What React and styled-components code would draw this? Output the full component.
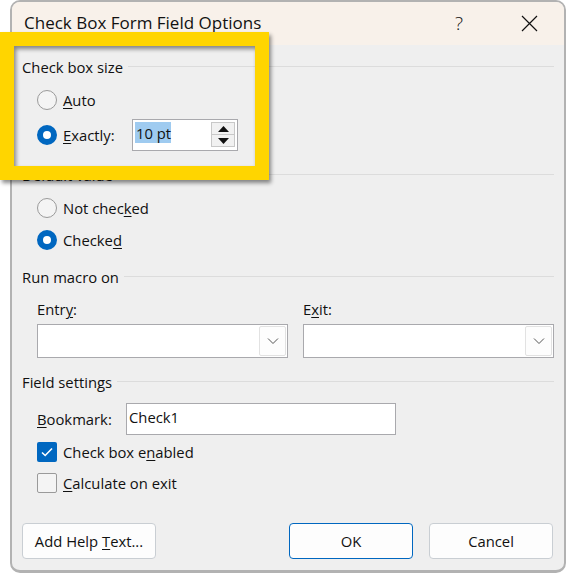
import React from "react";
import styled, { createGlobalStyle } from "styled-components";

const Global = createGlobalStyle`
  html, body {
    margin: 0;
    background: #fff;
  }
  body {
    font-family: "Open Sans", "Noto Sans", sans-serif;
    color: #111;
    font-size: 14.8px;
  }
`;

const Page = styled("div")`
  position: relative;
  width: 566px;
  height: 573px;
  overflow: hidden;
  padding-left: 10px;
  box-sizing: border-box;
`;

const Dialog = styled("div")`
  display: flex;
  flex-direction: column;
  box-sizing: border-box;
  width: 556px;
  height: 573px;
  background: #efefef;
  border: 2px solid #b2b2b2;
  border-bottom-width: 3px;
  border-radius: 10px;
  overflow: hidden;
`;

const TitleBar = styled("div")`
  display: flex;
  align-items: center;
  flex: none;
  height: 43px;
  padding-left: 12px;
  background: #f8f1ea;
`;

const Title = styled("div")`
  flex: 1;
  font-size: 17px;
  margin-top: -2px;
`;

const HelpGlyph = styled("div")`
  width: 24px;
  margin-right: 50px;
  margin-top: -2px;
  text-align: center;
  font-size: 19px;
  font-weight: 300;
`;

const CloseButton = styled("svg")`
  width: 17px;
  height: 17px;
  margin-right: 26px;
  margin-top: -1px;
`;

const Body = styled("div")`
  display: flex;
  flex-direction: column;
  flex: 1;
  padding: 11px 10px 11px;
`;

const Section = styled("div")`
  display: flex;
  flex-direction: column;
  margin-top: ${(p) => p.$before || 0}px;
`;

const SectionHeader = styled("div")`
  display: flex;
  align-items: center;
  height: 22px;
  gap: 5px;
  white-space: nowrap;

  &::after {
    content: "";
    flex: 1;
    height: 1px;
    margin-top: -1px;
    background: #dcdcdc;
  }
`;

const Stack = styled("div")`
  display: flex;
  flex-direction: column;
  padding-top: ${(p) => p.$top}px;
  gap: ${(p) => p.$gap}px;
`;

const OptionRow = styled("div")`
  display: flex;
  align-items: center;
  height: ${(p) => p.$h || 30}px;
  padding-left: 15px;
`;

const Radio = styled("span")`
  flex: none;
  box-sizing: border-box;
  width: 20px;
  height: 20px;
  border-radius: 50%;
  margin-right: 6px;
  background: ${(p) => (p.$on ? "#fff" : "#f4f4f4")};
  border: ${(p) => (p.$on ? "6px solid #0067c0" : "1.5px solid #9a9a9a")};
`;

const CheckBox = styled("span")`
  display: flex;
  align-items: center;
  justify-content: center;
  flex: none;
  box-sizing: border-box;
  width: 20px;
  height: 20px;
  border-radius: 2px;
  margin-right: 6px;
  background: ${(p) => (p.$on ? "#0067c0" : "#f4f4f4")};
  border: ${(p) => (p.$on ? "none" : "1.5px solid #9a9a9a")};
`;

const Label = styled("span")`
  flex: none;
  width: ${(p) => (p.$w ? `${p.$w}px` : "auto")};
  white-space: nowrap;

  u {
    text-underline-offset: 2px;
    text-decoration-thickness: 1px;
  }
`;

const Spinner = styled("div")`
  display: flex;
  align-items: flex-start;
  box-sizing: border-box;
  width: 106px;
  height: 32px;
  margin-left: 18px;
  padding: 2px;
  background: #fff;
  border: 1px solid #a9a9ad;
`;

const SpinnerValue = styled("div")`
  display: flex;
  flex: 1;
`;

const Selected = styled("span")`
  width: 36px;
  height: 21px;
  padding-left: 1px;
  box-sizing: border-box;
  line-height: 22px;
  background: #9fcbf0;
  white-space: nowrap;
`;

const SpinnerButtons = styled("div")`
  display: flex;
  flex-direction: column;
  flex: none;
  width: 24px;
  height: 25px;
`;

const SpinnerButton = styled("div")`
  display: flex;
  align-items: center;
  justify-content: center;
  flex: 1;
  background: #f1f1f1;
  border: 1px solid #c8c8c8;
  box-sizing: border-box;

  & + & {
    border-top: none;
  }
`;

const Combos = styled("div")`
  display: grid;
  grid-template-columns: 251px 251px;
  column-gap: 15px;
  padding: 11px 0 0 15px;
`;

const FieldLabel = styled("div")`
  height: 22px;
  line-height: 21px;
  margin-bottom: 3px;
`;

const Combo = styled("div")`
  display: flex;
  align-items: center;
  justify-content: flex-end;
  box-sizing: border-box;
  height: 34px;
  padding-right: 1px;
  background: #fff;
  border: 1px solid #a9a9ad;
`;

const ComboButton = styled("div")`
  display: flex;
  align-items: center;
  justify-content: center;
  box-sizing: border-box;
  width: 27px;
  height: 30px;
  background: #fdfdfd;
  border: 1px solid #e2e2e2;
  border-radius: 2px;
`;

const BookmarkRow = styled("div")`
  display: flex;
  align-items: center;
  padding: 10px 0 0 15px;
`;

const TextInput = styled("div")`
  box-sizing: border-box;
  width: 270px;
  height: 32px;
  margin-left: 14px;
  padding-left: 2px;
  line-height: 26px;
  background: #fff;
  border: 1px solid #a9a9ad;
`;

const Footer = styled("div")`
  display: flex;
  margin-top: auto;
  padding-right: 1px;
  gap: 16px;
`;

const Button = styled("div")`
  display: flex;
  align-items: center;
  justify-content: center;
  box-sizing: border-box;
  width: ${(p) => p.$w || 124}px;
  height: 36px;
  background: #fdfdfd;
  border: 1px solid ${(p) => (p.$primary ? "#0067c0" : "#c9ced3")};
  border-radius: 4px;
`;

const Spacer = styled("div")`
  flex: 1;
`;

const Highlight = styled("div")`
  position: absolute;
  left: 0;
  top: 32px;
  width: 269px;
  height: 148px;
  box-sizing: border-box;
  border: 14px solid #ffd500;
  box-shadow: 2px 3px 4px rgba(0, 0, 0, 0.45),
    inset 2px 3px 4px rgba(0, 0, 0, 0.45);
`;

const Chevron = () => (
  <svg width="12" height="8" viewBox="0 0 12 8">
    <path d="M1 1.5 L6 6.5 L11 1.5" fill="none" stroke="#555" strokeWidth="1" />
  </svg>
);

const Arrow = ({ up }) => (
  <svg width="11" height="6" viewBox="0 0 11 6">
    <path d={up ? "M5.5 0 L11 6 L0 6 Z" : "M0 0 L11 0 L5.5 6 Z"} fill="#111" />
  </svg>
);

export default function App() {
  return (
    <>
      <Global />
      <Page>
        <Dialog>
          <TitleBar>
            <Title>Check Box Form Field Options</Title>
            <HelpGlyph>?</HelpGlyph>
            <CloseButton viewBox="0 0 17 17">
              <path d="M1 1 L16 16 M16 1 L1 16" stroke="#111" strokeWidth="1.2" fill="none" />
            </CloseButton>
          </TitleBar>
          <Body>
            <Section>
              <SectionHeader>Check box size</SectionHeader>
              <Stack $top={7} $gap={4}>
                <OptionRow>
                  <Radio />
                  <Label><u>A</u>uto</Label>
                </OptionRow>
                <OptionRow $h={32}>
                  <Radio $on />
                  <Label $w={51}><u>E</u>xactly:</Label>
                  <Spinner>
                    <SpinnerValue><Selected>10 pt</Selected></SpinnerValue>
                    <SpinnerButtons>
                      <SpinnerButton><Arrow up /></SpinnerButton>
                      <SpinnerButton><Arrow /></SpinnerButton>
                    </SpinnerButtons>
                  </Spinner>
                </OptionRow>
              </Stack>
            </Section>
            <Section $before={13}>
              <SectionHeader>Default value</SectionHeader>
              <Stack $top={7} $gap={2}>
                <OptionRow>
                  <Radio />
                  <Label>Not chec<u>k</u>ed</Label>
                </OptionRow>
                <OptionRow>
                  <Radio $on />
                  <Label>Checke<u>d</u></Label>
                </OptionRow>
              </Stack>
            </Section>
            <Section $before={11}>
              <SectionHeader>Run macro on</SectionHeader>
              <Combos>
                <div>
                  <FieldLabel>Entr<Label><u>y</u></Label>:</FieldLabel>
                  <Combo><ComboButton><Chevron /></ComboButton></Combo>
                </div>
                <div>
                  <FieldLabel>E<Label><u>x</u></Label>it:</FieldLabel>
                  <Combo><ComboButton><Chevron /></ComboButton></Combo>
                </div>
              </Combos>
            </Section>
            <Section $before={13}>
              <SectionHeader>Field settings</SectionHeader>
              <BookmarkRow>
                <Label $w={75}><u>B</u>ookmark:</Label>
                <TextInput>Check1</TextInput>
              </BookmarkRow>
              <Stack $top={2} $gap={1}>
                <OptionRow>
                  <CheckBox $on>
                    <svg width="14" height="12" viewBox="0 0 14 12">
                      <path d="M2 6.5 L5.2 9.5 L12 2.5" fill="none" stroke="#fff" strokeWidth="1.6" />
                    </svg>
                  </CheckBox>
                  <Label>Check box e<u>n</u>abled</Label>
                </OptionRow>
                <OptionRow>
                  <CheckBox />
                  <Label><u>C</u>alculate on exit</Label>
                </OptionRow>
              </Stack>
            </Section>
            <Footer>
              <Button $w={134}><Label>Add Help <u>T</u>ext...</Label></Button>
              <Spacer />
              <Button $primary>OK</Button>
              <Button>Cancel</Button>
            </Footer>
          </Body>
        </Dialog>
        <Highlight />
      </Page>
    </>
  );
}
